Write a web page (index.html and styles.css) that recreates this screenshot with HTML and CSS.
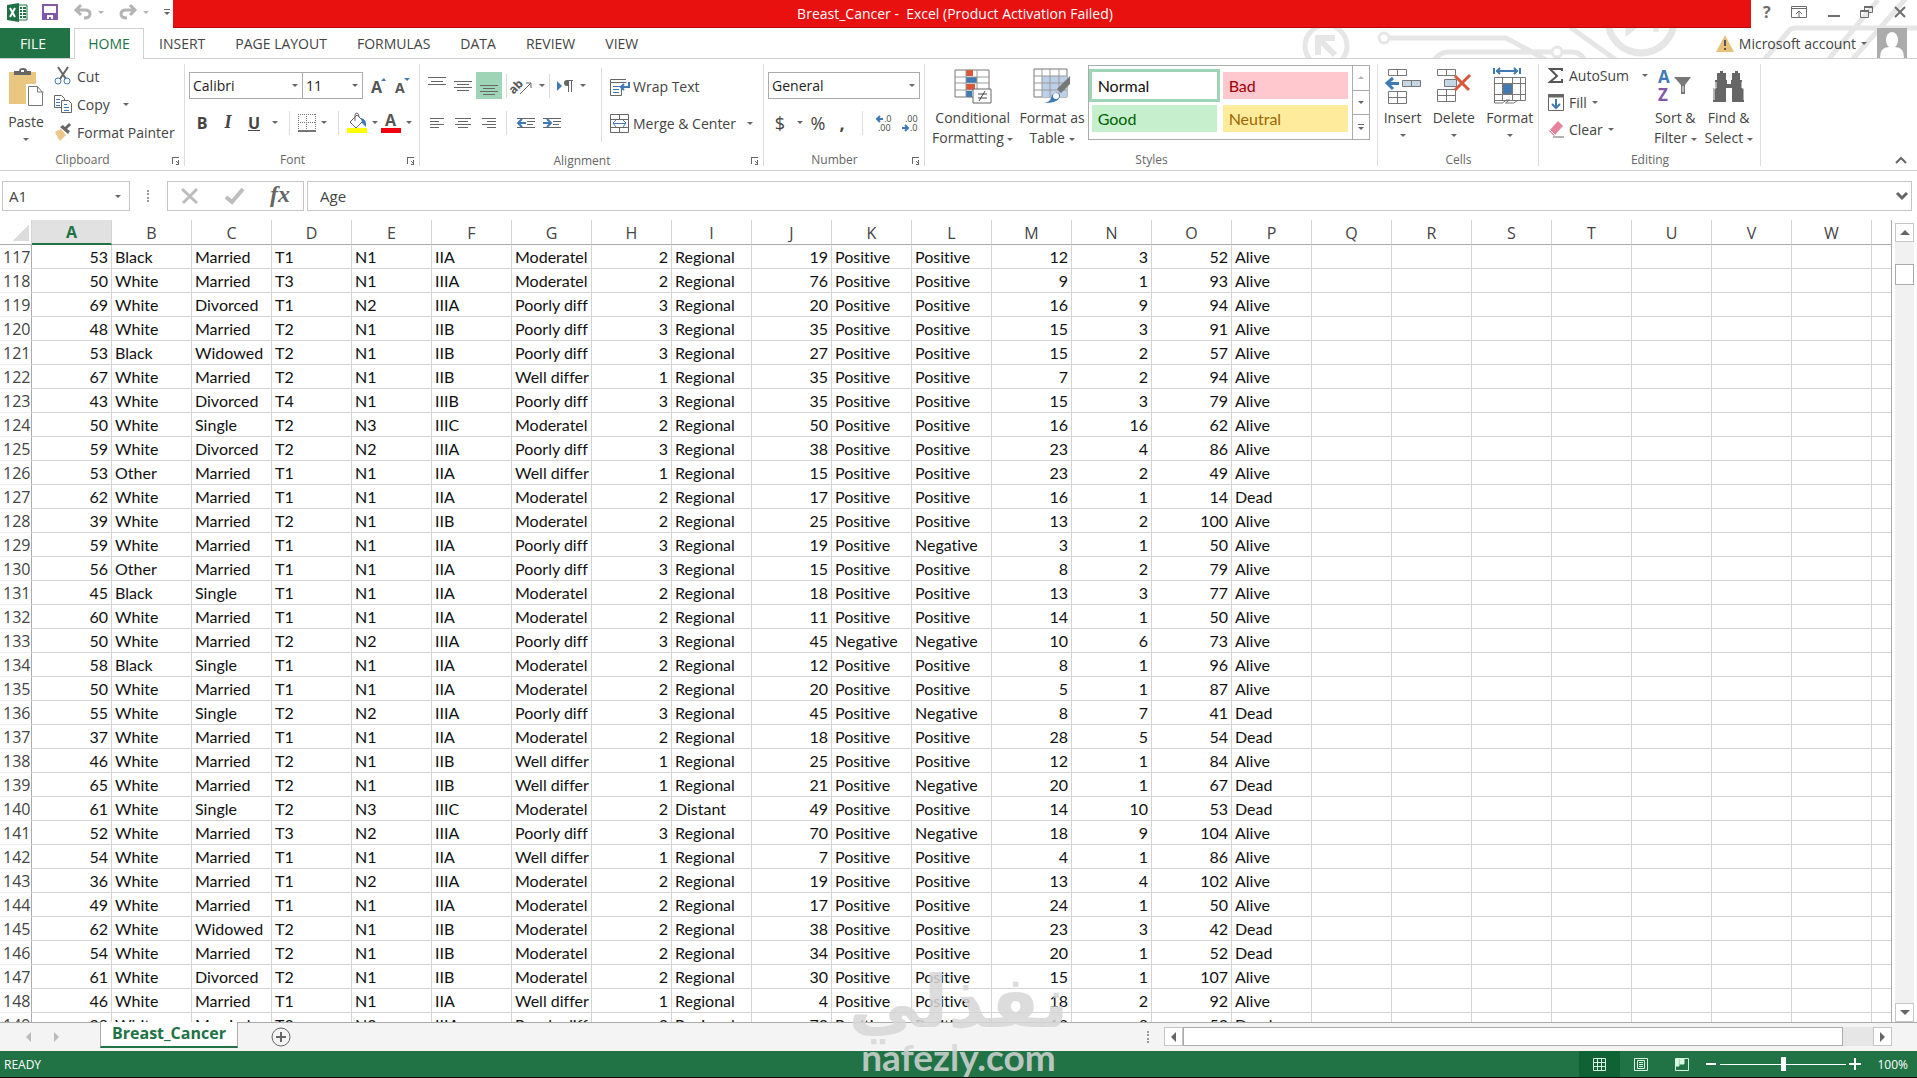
FILE: index.html
```html
<!DOCTYPE html>
<html lang="en">
  <head>
    <meta charset="UTF-8" />
    <meta name="viewport" content="width=device-width, initial-scale=1.0" />
    <title>Breast_Cancer - Excel</title>
    <link rel="stylesheet" href="styles.css">
  </head>
  <body>
    <header class="top">
      <svg class="circuit" width="617" height="58" viewBox="0 0 617 58" fill="none" stroke="#e6e6e6" stroke-width="5">
        <circle cx="26" cy="46" r="21" />
        <path d="M18 55V38h17M18 38l17 17" stroke-width="6" />
        <circle cx="84" cy="38" r="5" stroke-width="3" />
        <path d="M90 38h116l26 14 14 8M134 60q6-8 14-8h104M262 52h10q8 0 12 7" />
        <circle cx="257" cy="52" r="5" stroke-width="3" />
        <path d="M270 27l46 33" />
        <circle cx="341" cy="20" r="33" stroke-width="7" />
        <path d="M328 20v12l12-10M356 20v12" />
        <path d="M464 60l24-28q2-4 8-4h122M528 60L578 0M552 60L608-4" />
      </svg>
      <div class="title-bar">
        <div class="quick">
          <svg width="21" height="19" viewBox="0 0 21 19">
            <path d="M11 2h9v15h-9" fill="#fff" stroke="#217346" />
            <path d="M13 5h2M16 5h3M13 8h2M16 8h3M13 11h2M16 11h3M13 14h2M16 14h3" stroke="#217346" stroke-width="2" />
            <path d="M0 2l12-2v19L0 17z" fill="#1e7145" />
            <path d="M3 5l5 9M8 5l-5 9" stroke="#fff" stroke-width="2" />
          </svg>
          <button class="save" aria-label="Save">
            <svg width="16" height="16" viewBox="0 0 16 16"><path d="M1 1h14v14H1z" fill="#fff" stroke="#8258a8" stroke-width="2" /><path d="M2 9h12v6H2z" fill="#8258a8" /><path d="M5 11h6v4H9v-2H7v2H5z" fill="#fff" /></svg>
          </button>
          <button class="undo" aria-label="Undo">
            <svg width="18" height="16" viewBox="0 0 18 16" fill="none" stroke="#b4b4b4" stroke-width="3"><path d="M7 1L2 6l5 5M2 6h9q5 0 5 4 0 4-6 4" /></svg>
            <i class="caret pale"></i>
          </button>
          <button class="undo" aria-label="Redo">
            <svg width="18" height="16" viewBox="0 0 18 16" fill="none" stroke="#b4b4b4" stroke-width="3"><path d="M11 1l5 5-5 5M16 6H7q-5 0-5 4 0 4 6 4" /></svg>
            <i class="caret pale"></i>
          </button>
          <button class="custom" aria-label="Customize"><i class="caret"></i></button>
        </div>
        <h1>Breast_Cancer -&nbsp; Excel (Product Activation Failed)</h1>
        <div class="window-buttons">
          <button aria-label="Help" class="help">?</button>
          <button aria-label="Ribbon options"><svg width="16" height="12" viewBox="0 0 16 12" fill="none" stroke="#6d6d6d"><path d="M.5.5h15v11H.5zM1 2.500h14M8 11V5M5 8l3-3 3 3" /></svg></button>
          <button aria-label="Minimize"><svg width="12" height="12" viewBox="0 0 12 12"><path d="M0 9h12v2H0z" fill="#6d6d6d" /></svg></button>
          <button aria-label="Restore"><svg width="13" height="12" viewBox="0 0 13 12" fill="none" stroke="#6d6d6d"><path d="M4.500 4V.5h8v6H9M.5 4.500h8v7h-8z" /><path d="M4 1h8M1 5h8" stroke-width="2" /></svg></button>
          <button aria-label="Close"><svg width="12" height="12" viewBox="0 0 12 12" stroke="#6d6d6d" stroke-width="2"><path d="M1 1l10 10M11 1L1 11" /></svg></button>
        </div>
      </div>
      <nav class="tabs">
        <a class="file" href="#file">FILE</a>
        <a class="current" href="#home">HOME</a>
        <a href="#insert">INSERT</a>
        <a href="#layout">PAGE LAYOUT</a>
        <a href="#formulas">FORMULAS</a>
        <a href="#data">DATA</a>
        <a href="#review">REVIEW</a>
        <a href="#view">VIEW</a>
        <button class="account">
          <svg width="18" height="17" viewBox="0 0 18 17"><path d="M9 0l9 17H0z" fill="#e8c27a" /><path d="M9 5v6M9 13v2" stroke="#555" stroke-width="2" /></svg>
          Microsoft account <i class="caret"></i>
        </button>
        <svg class="avatar" width="30" height="30" viewBox="0 0 30 30"><path d="M0 0h30v30H0z" fill="#ababab" /><ellipse cx="15" cy="12" rx="6" ry="8" fill="#fff" /><path d="M3 30q0-11 9-11h6q9 0 9 11z" fill="#fff" /></svg>
      </nav>
    </header>

    <section class="ribbon">
      <div class="group clipboard">
        <div class="tools">
          <button class="big paste">
            <svg width="36" height="40" viewBox="0 0 36 40"><path d="M1 4h27v32H1z" fill="#eac780" /><path d="M6 7V3h5q0-3 4-3t4 3h4v4z" fill="#666" /><path d="M13 3h3" stroke="#fff" stroke-width="2" /><path d="M20 18h9l6 6v13H20z" fill="#fff" stroke="#fff" stroke-width="4" /><path d="M20.500 18.500h9l5 6v13h-14zM29.500 18v6h6" fill="#fff" stroke="#777" /></svg>
            <span>Paste</span><i class="caret"></i>
          </button>
          <div class="stack">
            <button><svg width="18" height="18" viewBox="0 0 18 18" fill="none"><path d="M4 0l8 12M14 0L6 12" stroke="#666" stroke-width="2" /><circle cx="4" cy="14" r="3" stroke="#3f7ab5" /><circle cx="13" cy="14" r="3" stroke="#3f7ab5" /></svg>Cut</button>
            <button><svg width="18" height="18" viewBox="0 0 18 18" fill="#fff" stroke="#666"><path d="M.5.5h7l3 3v9H.5z" /><path d="M7.500 5.500h7l3 3v9h-10z" /><path d="M2 4.500h4M2 7.500h4M2 10.500h4M10 9.500h3M10 12.500h5M10 15.500h5" stroke="#3f7ab5" /></svg>Copy <i class="caret far"></i></button>
            <button><svg width="18" height="18" viewBox="0 0 18 18"><path d="M1 9l6-3 5 6-6 6-2-3z" fill="#ecc58a" /><path d="M6 4l8 7 2-3-3-2 4-4-2-2-4 4-2-2z" fill="#666" /></svg>Format Painter</button>
          </div>
        </div>
        <footer class="with-launch">Clipboard<button class="launch" aria-label="Clipboard settings"></button></footer>
      </div>

      <div class="group font">
        <div class="rows">
          <div class="row">
            <select class="face" aria-label="Font"><option>Calibri</option></select>
            <select class="size" aria-label="Font size"><option>11</option></select>
            <button class="grow" aria-label="Increase font size"><svg width="16" height="18" viewBox="0 0 16 18"><text x="0" y="16" class="letter">A</text><path d="M10 4h5l-2-3z" fill="#3f7ab5" /></svg></button>
            <button class="grow" aria-label="Decrease font size"><svg width="16" height="18" viewBox="0 0 16 18"><text x="0" y="16" class="letter small">A</text><path d="M9 1h6l-3 3z" fill="#3f7ab5" /></svg></button>
          </div>
          <div class="row">
            <button class="glyph"><b>B</b></button>
            <button class="glyph"><em>I</em></button>
            <button class="glyph"><u>U</u></button>
            <i class="caret"></i>
            <hr>
            <button aria-label="Borders"><svg width="18" height="18" viewBox="0 0 18 18" stroke="#777" fill="none" stroke-dasharray="1 1"><path d="M.5 0v17M8.500 0v17M17.500 0v17M0 .5h18M0 8.500h18" /><path d="M0 17h18" stroke-dasharray="none" stroke-width="2" /></svg></button>
            <i class="caret"></i>
            <hr>
            <button aria-label="Fill colour"><svg width="20" height="20" viewBox="0 0 20 20"><path d="M3 9l7-7 6 6-7 7z" fill="#fff" stroke="#666" /><path d="M8 8V2q0-2 2-2t2 4" fill="none" stroke="#666" /><path d="M14 5q6 1 5 9l-4-4z" fill="#3f7ab5" /><path d="M0 15h20v5H0z" fill="#ff0" /></svg></button>
            <i class="caret"></i>
            <button aria-label="Font colour"><svg width="20" height="20" viewBox="0 0 20 20"><text x="4" y="13" class="letter">A</text><path d="M0 15h20v5H0z" fill="#f10010" /></svg></button>
            <i class="caret"></i>
          </div>
        </div>
        <footer class="with-launch">Font<button class="launch" aria-label="Font settings"></button></footer>
      </div>

      <div class="group alignment">
        <div class="tools">
          <div class="rows">
            <div class="row">
              <button class="line" aria-label="Top align"><svg width="18" height="20" viewBox="0 0 18 20" stroke="#666"><path d="M0 1.500h18M3 5.500h12M0 8.500h18" /></svg></button>
              <button class="line" aria-label="Middle align"><svg width="18" height="20" viewBox="0 0 18 20" stroke="#666"><path d="M0 5.500h18M3 8.500h12M0 11.500h18M3 14.500h12" /></svg></button>
              <button class="line on" aria-label="Bottom align"><svg width="18" height="20" viewBox="0 0 18 20" stroke="#666"><path d="M0 9.500h18M3 12.500h12M0 15.500h18M3 18.500h12" /></svg></button>
              <hr>
              <button aria-label="Orientation"><svg width="20" height="18" viewBox="0 0 20 18"><text x="-4" y="13" transform="rotate(-45 4 10)" class="letter tiny">ab</text><path d="M7 17L18 6M13 6h5v5" stroke="#666" fill="none" /></svg></button>
              <i class="caret"></i>
              <hr>
              <button aria-label="Text direction"><svg width="18" height="14" viewBox="0 0 18 14"><path d="M1 2l5 5-5 5z" fill="#3f7ab5" /><path d="M17 1.500h-6M12.500 1v12M15.500 1v12" stroke="#666" fill="none" /><path d="M12 1h-1q-3 0-3 3t3 3h1z" fill="#666" /></svg></button>
              <i class="caret"></i>
            </div>
            <div class="row">
              <button class="line" aria-label="Align left"><svg width="14" height="12" viewBox="0 0 14 12" stroke="#666"><path d="M0 1.500h14M0 4.500h9M0 7.500h14M0 10.500h9" /></svg></button>
              <button class="line" aria-label="Center"><svg width="16" height="12" viewBox="0 0 16 12" stroke="#666"><path d="M0 1.500h16M3 4.500h10M0 7.500h16M3 10.500h10" /></svg></button>
              <button class="line" aria-label="Align right"><svg width="14" height="12" viewBox="0 0 14 12" stroke="#666"><path d="M0 1.500h14M5 4.500h9M0 7.500h14M5 10.500h9" /></svg></button>
              <hr>
              <button class="line" aria-label="Decrease indent"><svg width="18" height="12" viewBox="0 0 18 12" stroke="#666"><path d="M0 1.500h18M10 4.500h8M10 7.500h6M0 10.500h18" /><path d="M9 6H1M5 2L1 6l4 4" stroke="#3f7ab5" stroke-width="2" fill="none" /></svg></button>
              <button class="line" aria-label="Increase indent"><svg width="18" height="12" viewBox="0 0 18 12" stroke="#666"><path d="M0 1.500h18M10 4.500h8M10 7.500h6M0 10.500h18" /><path d="M0 6h8M4 2l4 4-4 4" stroke="#3f7ab5" stroke-width="2" fill="none" /></svg></button>
            </div>
          </div>
          <div class="rows wide">
            <div class="row">
              <button><svg width="20" height="18" viewBox="0 0 20 18" fill="none" stroke="#666"><path d="M16 1.500H.5v3h16M11.500 10v7.500H.5v-13" /><path d="M3 8.500h10M3 11.500h6M3 14.500h6" stroke="#3f7ab5" /><path d="M19 4v5h-7M14 6l-3 3 3 3" stroke="#3f7ab5" stroke-width="2" /></svg>Wrap Text</button>
            </div>
            <div class="row">
              <button><svg width="20" height="19" viewBox="0 0 20 19" fill="none" stroke="#666"><path d="M.5.5h18v18H.5zM0 5.500h19M0 13.500h19M9.500 0v5M9.500 13v6" /><path d="M3 9.500h13M6 6L3 9l3 4M13 6l3 3-3 4" stroke="#3f7ab5" /></svg>Merge &amp; Center <i class="caret far"></i></button>
            </div>
          </div>
        </div>
        <footer class="with-launch">Alignment<button class="launch" aria-label="Alignment settings"></button></footer>
      </div>

      <div class="group number">
        <div class="rows">
          <div class="row">
            <select class="format" aria-label="Number format"><option>General</option></select>
          </div>
          <div class="row">
            <button class="sign">$</button>
            <i class="caret"></i>
            <button class="sign">%</button>
            <button class="sign"><b>,</b></button>
            <hr>
            <button class="line" aria-label="Increase decimal"><svg width="17" height="18" viewBox="0 0 17 18"><text x="8" y="8" class="dec">.0</text><text x="2" y="17" class="dec">.00</text><path d="M7 5H1M4 2L1 5l3 3" stroke="#3f7ab5" stroke-width="2" fill="none" /></svg></button>
            <button class="line" aria-label="Decrease decimal"><svg width="17" height="18" viewBox="0 0 17 18"><text x="3" y="8" class="dec">.00</text><text x="8" y="17" class="dec">.0</text><path d="M0 14h6M3 11l3 3-3 3" stroke="#3f7ab5" stroke-width="2" fill="none" /></svg></button>
          </div>
        </div>
        <footer class="with-launch">Number<button class="launch" aria-label="Number settings"></button></footer>
      </div>

      <div class="group styles">
        <div class="tools">
          <button class="big">
            <svg width="38" height="36" viewBox="0 0 38 36"><path d="M1 2h34v27H1z" fill="#fff" stroke="#777" /><path d="M12 2h7v6h-7zM12 16h9v6h-9z" fill="#d9583b" /><path d="M12 9h11v6H12zM12 23h6v6h-6z" fill="#3f7ab5" /><path d="M1 9h34M1 15h34M1 22h34M12 2v27M23 2v27" stroke="#999" fill="none" /><path d="M19 21h18v14H19z" fill="#fff" stroke="#666" /><path d="M24 26h9M24 30h9M31 23l-6 10" stroke="#444" /></svg>
            <span>Conditional<br>Formatting <i class="caret"></i></span>
          </button>
          <button class="big">
            <svg width="38" height="36" viewBox="0 0 38 36"><path d="M1 1h33v28H1z" fill="#fff" stroke="#777" /><path d="M9 8h25v21H9z" fill="#bdd0ea" /><path d="M1 8h33M1 15h33M1 22h33M9 1v28M17 1v28M26 1v28" stroke="#999" /><path d="M37 8v8l-9 9-4-4z" fill="#777" /><path d="M11 35q7-1 8-8 5-5 8 0 0 8-16 8z" fill="#3f7ab5" /><circle cx="23" cy="28" r="3" fill="#fff" /></svg>
            <span>Format as<br>Table <i class="caret"></i></span>
          </button>
          <div class="gallery">
            <button class="normal">Normal</button>
            <button class="bad">Bad</button>
            <button class="good">Good</button>
            <button class="neutral">Neutral</button>
            <div class="gallery-nav">
              <button aria-label="Previous styles"><i class="caret up pale"></i></button>
              <button aria-label="Next styles"><i class="caret"></i></button>
              <button aria-label="More styles" class="custom"><i class="caret"></i></button>
            </div>
          </div>
        </div>
        <footer>Styles</footer>
      </div>

      <div class="group cells">
        <div class="tools">
          <button class="big">
            <svg width="36" height="36" viewBox="0 0 36 36" fill="#fff" stroke="#777"><path d="M3.500 1.500h18v6h-18zM12.500 1v6M3.500 23.500h18v12h-18zM12.500 23v12M3 29.500h18" /><path d="M17.500 12.500h18v6h-18zM26.500 12v6" fill="#c5d7e4" /><path d="M14 15.500H2M8 10l-6 5 6 6" stroke="#3f7ab5" stroke-width="3" fill="none" /></svg>
            <span>Insert</span><i class="caret"></i>
          </button>
          <button class="big">
            <svg width="36" height="36" viewBox="0 0 36 36" fill="#fff" stroke="#777"><path d="M1.500 1.500h18v6h-18zM10.500 1v6M1.500 21.500h18v12h-18zM10.500 21v12M1 27.500h18" /><path d="M8.500 11.500h12v7h-12z" fill="#c5d7e4" /><path d="M19 8l14 14M34 7L19 22" stroke="#d9583b" stroke-width="3" /></svg>
            <span>Delete</span><i class="caret"></i>
          </button>
          <button class="big">
            <svg width="36" height="36" viewBox="0 0 36 36" fill="none" stroke="#777"><path d="M2.500 9.500h31v23h-31zM2 15.500h31M2 26.500h31M10.500 9v23M20.500 9v23M28.500 9v23M2.500 32v3h8l4-3h3l-4 3h8l5-3" /><path d="M11 16h9v10h-9z" fill="#3f7ab5" /><path d="M2 0v6M28 0v6M4 3h22M8 0L5 3l3 3M22 0l3 3-3 3" stroke="#3f7ab5" stroke-width="2" /></svg>
            <span>Format</span><i class="caret"></i>
          </button>
        </div>
        <footer>Cells</footer>
      </div>

      <div class="group editing">
        <div class="tools">
          <div class="stack">
            <button><svg width="16" height="17" viewBox="0 0 16 17"><path d="M14 4V2H2l7 7-7 6h12v-3" fill="none" stroke="#555" stroke-width="2" /></svg>AutoSum <i class="caret far"></i></button>
            <button><svg width="16" height="17" viewBox="0 0 16 17" fill="none" stroke="#666"><path d="M.5.5h15v16H.5z" /><path d="M0 2h16" stroke-width="3" /><path d="M8 5v9M4 10l4 4 4-4" stroke="#3f7ab5" stroke-width="2" /></svg>Fill <i class="caret"></i></button>
            <button><svg width="16" height="17" viewBox="0 0 16 17"><path d="M1 10L10 0l5 5L6 15z" fill="#e8829c" /><path d="M2 9l5 5" stroke="#fff" /><path d="M5 16h11" stroke="#666" /></svg>Clear <i class="caret"></i></button>
          </div>
          <button class="big">
            <svg width="36" height="36" viewBox="0 0 36 36"><text x="1" y="15" class="sort-a">A</text><text x="1" y="33" class="sort-z">Z</text><path d="M17 9h17l-6 8v9h-4v-9z" fill="#777" /><path d="M26 18v6" stroke="#fff" /></svg>
            <span>Sort &amp;<br>Filter <i class="caret"></i></span>
          </button>
          <button class="big">
            <svg width="36" height="36" viewBox="0 0 36 36"><path d="M9 3h3v2h3v7h1v4h4v-4h1V5h3V3h3v2h2v7h2v8h2v14H21V20h-6v14H2V20h2v-8h2V5h3z" fill="#666" /><path d="M5 14v6H3v12M31 14v6h2v12" stroke="#fff" fill="none" /></svg>
            <span>Find &amp;<br>Select <i class="caret"></i></span>
          </button>
        </div>
        <footer>Editing</footer>
      </div>
      <button class="collapse" aria-label="Collapse ribbon"><svg width="12" height="8" viewBox="0 0 12 8"><path d="M1 7l5-5 5 5" stroke="#666" stroke-width="2" fill="none" /></svg></button>
    </section>

    <section class="formula">
      <select class="name-box" aria-label="Name box"><option>A1</option></select>
      <span class="grip"></span>
      <div class="formula-buttons">
        <button aria-label="Cancel"><svg width="18" height="16" viewBox="0 0 18 16"><path d="M1 1l15 14M16 1L2 15" stroke="#bdbdbd" stroke-width="3" /></svg></button>
        <button aria-label="Enter"><svg width="20" height="16" viewBox="0 0 20 16"><path d="M1 9l6 5L18 1" stroke="#bdbdbd" stroke-width="4" fill="none" /></svg></button>
        <button class="fx" aria-label="Insert function">fx</button>
      </div>
      <div class="formula-input">
        <input type="text" value="Age" aria-label="Formula">
        <button aria-label="Expand"><svg width="12" height="9" viewBox="0 0 12 9"><path d="M1 1l5 5 5-5" stroke="#666" stroke-width="3" fill="none" /></svg></button>
      </div>
    </section>

    <main class="sheet">
      <div class="grid">
        <table>
          <thead><tr id="columns"></tr></thead>
          <tbody id="records"></tbody>
        </table>
      </div>
      <div class="vscroll">
        <button aria-label="Scroll up"><i class="caret up big-caret"></i></button>
        <span class="thumb"></span>
        <button aria-label="Scroll down"><i class="caret big-caret"></i></button>
      </div>
    </main>

    <section class="sheet-bar">
      <div class="sheet-tabs">
        <button class="arrow" aria-label="Previous sheet"><i class="caret left"></i></button>
        <button class="arrow" aria-label="Next sheet"><i class="caret right"></i></button>
        <a class="sheet-tab" href="#sheet">Breast_Cancer</a>
        <button class="add" aria-label="New sheet"><svg width="20" height="20" viewBox="0 0 20 20" fill="none" stroke="#666"><circle cx="10" cy="10" r="9" /><path d="M10 5v10M5 10h10" stroke-width="2" /></svg></button>
      </div>
      <span class="grip"></span>
      <div class="hscroll">
        <button aria-label="Scroll left"><i class="caret left"></i></button>
        <span class="thumb"></span>
        <button aria-label="Scroll right"><i class="caret right"></i></button>
      </div>
    </section>

    <footer class="status">
      <span class="ready">READY</span>
      <button class="view on" aria-label="Normal view"><svg width="14" height="13" viewBox="0 0 14 13" fill="none" stroke="#d8f5e2"><path d="M.5.5h12v12H.5zM4.500 0v13M8.500 0v13M0 4.500h13M0 8.500h13" /></svg></button>
      <button class="view" aria-label="Page layout view"><svg width="14" height="13" viewBox="0 0 14 13" fill="none" stroke="#d8f5e2"><path d="M.5.5h13v12H.5zM3.500 2.500h7v8h-7zM5 4.500h4M5 6.500h4M5 8.500h4" /></svg></button>
      <button class="view" aria-label="Page break view"><svg width="14" height="13" viewBox="0 0 14 13" fill="none" stroke="#d8f5e2"><path d="M.5.5h13v12H.5z" /><path d="M1 1h3v7H1zM5 1h4v5H5z" fill="#d8f5e2" /></svg></button>
      <button class="zoom" aria-label="Zoom out"><svg width="10" height="10" viewBox="0 0 10 10"><path d="M0 5h10" stroke="#fff" stroke-width="2" /></svg></button>
      <input type="range" min="0" max="100" value="50" aria-label="Zoom">
      <button class="zoom" aria-label="Zoom in"><svg width="12" height="12" viewBox="0 0 12 12"><path d="M0 6h12M6 0v12" stroke="#fff" stroke-width="2" /></svg></button>
      <span class="percent">100%</span>
    </footer>

    <div class="watermark">
      <span class="arabic" lang="ar" dir="rtl">نفذلي</span>
      <span class="domain">nafezly.com</span>
    </div>
    <script src="script.js"></script>
  </body>
</html>
```
FILE: styles.css
```css
* {
  box-sizing: border-box;
}
body {
  margin: 0;
  height: 100vh;
  display: flex;
  flex-direction: column;
  overflow: hidden;
  position: relative;
  background-color: #fff;
  color: #444;
  font-family: "Open Sans", "Noto Sans", sans-serif;
  font-size: 14px;
}
button,
select,
input {
  font: inherit;
  color: inherit;
  margin: 0;
  padding: 0;
  border: none;
  background: none;
}
button {
  display: flex;
  align-items: center;
  justify-content: center;
  white-space: nowrap;
}
svg {
  display: block;
  flex-shrink: 0;
}
button svg {
  overflow: visible;
}
a {
  color: inherit;
  text-decoration: none;
}
hr {
  width: 1px;
  height: 24px;
  margin: 0 8px;
  border: none;
  background-color: #dcdcdc;
}
.caret {
  display: inline-block;
  flex-shrink: 0;
  border: 3px solid transparent;
  border-top-color: #666;
  border-bottom-width: 0;
  vertical-align: middle;
}
.caret.up {
  border-top-width: 0;
  border-bottom: 3px solid #666;
}
.caret.left,
.caret.right {
  border: 5px solid transparent;
}
.caret.left {
  border-right: 5px solid #666;
  border-left-width: 0;
}
.caret.right {
  border-left: 5px solid #666;
  border-right-width: 0;
}
.caret.big-caret {
  border-width: 5px;
}
.caret.big-caret.up {
  border-top-width: 0;
}
.caret.big-caret:not(.up) {
  border-bottom-width: 0;
}
.caret.pale {
  border-top-color: #b4b4b4;
}
.caret.up.pale {
  border-bottom-color: #b4b4b4;
}
.caret.far {
  margin-left: 8px;
}

/* title bar and tabs */
.top {
  position: relative;
}
.circuit {
  position: absolute;
  top: 0;
  right: 0;
}
.title-bar {
  display: flex;
  height: 28px;
  position: relative;
}
.quick {
  display: flex;
  align-items: center;
  width: 173px;
  padding: 0 2px 4px 7px;
}
.save {
  margin: 0 16px 0 14px;
}
.undo {
  gap: 6px;
  margin-right: 15px;
}
.custom {
  flex-direction: column;
  gap: 2px;
}
.custom::before {
  content: "";
  width: 6px;
  height: 1px;
  background-color: #666;
}
.title-bar h1 {
  flex: 1;
  margin: 0;
  padding-right: 14px;
  background-color: #e91010;
  border-bottom: 1px solid #b40c0c;
  color: #fff;
  font-size: 14px;
  font-weight: normal;
  line-height: 27px;
  text-align: center;
}
.window-buttons {
  display: flex;
  align-items: center;
  justify-content: space-between;
  width: 166px;
  padding: 0 11px 4px 12px;
}
.help {
  color: #6d6d6d;
  font-size: 16px;
  font-weight: bold;
}
.tabs {
  position: relative;
  display: flex;
  height: 31px;
  line-height: 31px;
  border-bottom: 1px solid #d0d0d0;
}
.tabs a {
  padding: 0 15px;
}
.tabs .file {
  width: 70px;
  padding: 0 4px 0 0;
  background-color: #217346;
  color: #fff;
  text-align: center;
}
.tabs .current {
  width: 70px;
  height: 31px;
  margin-left: 4px;
  padding: 0;
  background-color: #fff;
  border: 1px solid #d0d0d0;
  border-bottom: none;
  color: #217346;
  text-align: center;
  line-height: 29px;
}
.account {
  gap: 5px;
  margin-left: auto;
}
.avatar {
  margin: 0 10px;
}

/* ribbon */
.ribbon {
  display: flex;
  height: 112px;
  border-bottom: 1px solid #d0d0d0;
}
.group {
  position: relative;
  display: flex;
  flex-direction: column;
  justify-content: space-between;
  flex-shrink: 0;
}
.group::after {
  content: "";
  position: absolute;
  top: 5px;
  right: 0;
  width: 1px;
  height: 102px;
  background-color: #dcdcdc;
}
.group footer {
  height: 20px;
  color: #666;
  font-size: 12px;
  line-height: 20px;
  text-align: center;
}
.group footer.with-launch {
  padding-right: 20px;
}
.launch {
  position: absolute;
  right: 6px;
  bottom: 6px;
  width: 7px;
  height: 7px;
  border-top: 1px solid #666;
  border-left: 1px solid #666;
}
.launch::after {
  content: "";
  width: 4px;
  height: 4px;
  margin: 3px 0 0 3px;
  border-right: 1px solid #666;
  border-bottom: 1px solid #666;
  background: linear-gradient(45deg, transparent 40%, #666 40%, #666 60%, transparent 60%);
}
.tools {
  display: flex;
}
.clipboard {
  width: 185px;
}
.font {
  width: 235px;
}
.alignment {
  width: 344px;
}
.number {
  width: 161px;
}
.styles {
  width: 453px;
}
.cells {
  width: 161px;
}
.editing {
  width: 222px;
}
.big {
  flex-direction: column;
  justify-content: flex-start;
  padding: 9px 3px 0;
  line-height: 20px;
  text-align: center;
}
.big svg {
  margin-bottom: 4px;
}
.big > .caret {
  margin-top: 6px;
}
.big.paste {
  width: 52px;
}
.stack {
  padding-top: 3px;
}
.stack button {
  height: 28px;
  gap: 5px;
  padding: 0 2px;
}
.rows {
  padding: 8px 0 0 4px;
}
.row {
  display: flex;
  align-items: center;
  height: 37px;
}
.row button {
  gap: 3px;
}
select {
  appearance: none;
  height: 27px;
  padding-left: 3px;
  border: 1px solid #ababab;
  background: #fff url("data:image/svg+xml,%3Csvg xmlns='http://www.w3.org/2000/svg' width='6' height='3'%3E%3Cpath d='M0 0h6L3 3z' fill='%23666'/%3E%3C/svg%3E") no-repeat right 4px center;
  color: #222;
}
.face {
  width: 114px;
}
.size {
  width: 61px;
  margin-left: -1px;
}
.format {
  width: 152px;
}
.grow {
  margin-left: 8px;
}
.letter {
  fill: #555;
  font-size: 16px;
  font-weight: bold;
}
.letter.small {
  font-size: 14px;
}
.letter.tiny {
  font-size: 12px;
}
.dec {
  fill: #444;
  font-size: 9px;
}
.font .row > .caret,
.number .row > .caret {
  margin: 0 3px 0 5px;
}
.alignment .row > .caret {
  margin-left: 6px;
}
.glyph {
  width: 26px;
  font-size: 16px;
}
.glyph b,
.glyph em,
.glyph u {
  font-weight: bold;
}
.glyph em {
  font-family: "Liberation Serif", serif;
  font-size: 18px;
}
.line {
  width: 26px;
  height: 27px;
}
.line.on {
  background-color: #9fd5b7;
}
.alignment hr {
  margin: 0 6px 0 4px;
}
.alignment .wide {
  border-left: 1px solid #dcdcdc;
  margin: 9px 0 9px 6px;
  padding: 0 0 0 8px;
}
.alignment .rows:not(.wide) {
  width: 175px;
}
.sign {
  width: 24px;
  font-size: 18px;
}
.styles .tools {
  padding-left: 4px;
}
.gallery {
  position: relative;
  display: grid;
  grid-template-columns: 131px 131px;
  grid-template-rows: 33px 33px;
  flex: 1;
  height: 75px;
  margin: 6px 8px 0 0;
  padding-top: 3px;
  border: 1px solid #ababab;
}
.gallery > button {
  justify-content: flex-start;
  margin: 3px;
  padding-left: 6px;
  font-family: Lato, sans-serif;
  font-size: 16px;
}
.gallery .normal {
  margin: 0;
  border: 3px solid #9fd5b7;
  color: #111;
}
.gallery .bad {
  background-color: #ffc7ce;
  color: #9c0006;
}
.gallery .good {
  background-color: #c6efce;
  color: #006100;
}
.gallery .neutral {
  background-color: #ffeb9c;
  color: #9c6500;
}
.gallery-nav {
  position: absolute;
  top: 0;
  right: 0;
  bottom: 0;
  width: 17px;
  display: flex;
  flex-direction: column;
  border-left: 1px solid #ababab;
}
.gallery-nav button {
  flex: 1;
}
.gallery-nav button + button {
  border-top: 1px solid #ababab;
}
.cells .tools {
  justify-content: space-around;
}
.editing .tools {
  gap: 2px;
}
.editing .stack {
  width: 110px;
  padding: 3px 0 0 7px;
}
.editing .stack button {
  height: 27px;
}
.sort-a,
.sort-z {
  fill: #3f7ab5;
  font-size: 17px;
  font-weight: bold;
}
.sort-z {
  fill: #8258a8;
}
.collapse {
  align-self: flex-end;
  margin: 0 10px 6px auto;
}

/* formula bar */
.formula {
  display: flex;
  height: 49px;
  padding: 10px 5px 9px 2px;
  font-size: 15px;
}
.name-box {
  width: 128px;
  height: 30px;
  padding-left: 6px;
  border-color: #c6c6c6;
  background-position: right 8px center;
  color: #444;
}
.grip {
  width: 3px;
  height: 12px;
  margin: 9px 17px;
  border-left: 2px dotted #999;
}
.formula-buttons {
  display: flex;
  justify-content: space-between;
  width: 137px;
  padding: 0 13px;
  border: 1px solid #c6c6c6;
}
.fx {
  padding-bottom: 4px;
  color: #666;
  font-family: "Liberation Serif", serif;
  font-size: 24px;
  font-style: italic;
  font-weight: bold;
}
.formula-input {
  flex: 1;
  display: flex;
  margin-left: 3px;
  padding: 0 3px 0 12px;
  border: 1px solid #c6c6c6;
}
.formula-input input {
  flex: 1;
}

/* cells */
.sheet {
  flex: 1;
  display: flex;
  min-height: 0;
}
.grid {
  flex: 1;
  overflow: hidden;
  border-right: 1px solid #ababab;
}
table {
  width: 100%;
  table-layout: fixed;
  border-spacing: 0;
}
th,
td {
  width: 80px;
  height: 24px;
  padding: 0 3px;
  border-right: 1px solid #d4d4d4;
  border-bottom: 1px solid #d4d4d4;
  overflow: hidden;
  white-space: nowrap;
  line-height: 22px;
}
td {
  color: #111;
  font-family: Lato, sans-serif;
  font-size: 16px;
  font-variant-ligatures: none;
}
td:nth-child(8) {
  padding-right: 0;
}
.num {
  text-align: right;
}
th {
  font-size: 16px;
  font-weight: normal;
}
thead th {
  height: 25px;
  padding-top: 2px;
  border-bottom-color: #ababab;
}
thead th.picked {
  background-color: #e1e1e1;
  border-bottom: 2px solid #217346;
  color: #217346;
  font-weight: bold;
  line-height: 21px;
}
th:first-child {
  width: 32px;
  border-right-color: #ababab;
  border-bottom-color: #eee;
}
thead th:first-child {
  border-right-color: #d4d4d4;
  border-bottom-color: #ababab;
  background: linear-gradient(135deg, transparent 50%, #dcdcdc 50%) 12px 5px / 17px 16px no-repeat;
}
th:last-child,
td:last-child {
  width: auto;
  border-right: none;
}
.vscroll {
  display: flex;
  flex-direction: column;
  justify-content: space-between;
  width: 19px;
  margin: 3px 3px 0;
  background-color: #f1f1f1;
}
.vscroll button,
.hscroll button {
  width: 19px;
  height: 19px;
  border: 1px solid #c6c6c6;
  background-color: #fff;
}
.thumb {
  border: 1px solid #ababab;
  background-color: #fff;
}
.vscroll .thumb {
  height: 21px;
  margin: 22px 0 auto;
}

/* sheet tabs */
.sheet-bar {
  display: flex;
  height: 29px;
  padding-right: 25px;
  border-top: 1px solid #ababab;
  background-color: #f4f4f4;
}
.sheet-tabs {
  flex: 1;
  display: flex;
  align-items: center;
  padding-left: 14px;
}
.arrow {
  width: 28px;
  opacity: 0.4;
}
.sheet-tab {
  align-self: flex-start;
  height: 26px;
  margin: -1px 33px 0 30px;
  padding: 0 11px;
  border: 1px solid #ababab;
  border-top: none;
  border-bottom: 2px solid #217346;
  background-color: #fff;
  color: #217346;
  font-size: 16px;
  font-weight: bold;
  line-height: 22px;
}
.sheet-bar .grip {
  margin: 8px 14px;
}
.hscroll {
  display: flex;
  width: 38vw;
  height: 19px;
  margin-top: 4px;
  background-color: #e6e6e6;
}
.hscroll .thumb {
  flex: 1;
  margin-right: 30px;
}

/* status bar */
.status {
  display: flex;
  align-items: center;
  height: 27px;
  padding-right: 9px;
  border-bottom: 1px solid #111;
  background-color: #217346;
  color: #fff;
  font-size: 12px;
}
.ready {
  flex: 1;
  padding-left: 4px;
}
.view {
  width: 41px;
  height: 26px;
}
.view.on {
  background-color: #0e6233;
}
.zoom {
  width: 18px;
}
.status input {
  appearance: none;
  width: 126px;
  height: 14px;
  background: linear-gradient(#fff, #fff) center / 100% 1px no-repeat;
}
.status input::-webkit-slider-thumb {
  appearance: none;
  width: 5px;
  height: 14px;
  background-color: #fff;
}
.percent {
  width: 44px;
  text-align: right;
}

.watermark {
  position: absolute;
  left: 0;
  right: 0;
  bottom: 0;
  display: flex;
  flex-direction: column;
  align-items: center;
  color: rgba(214, 214, 214, 0.85);
  font-weight: bold;
  pointer-events: none;
}
.arabic {
  font-family: "DejaVu Sans", sans-serif;
  font-size: 72px;
  line-height: 68px;
}
.domain {
  font-family: Lato, sans-serif;
  font-size: 37px;
  line-height: 42px;
}
```
FILE: script.js
```js
const columns = "ABCDEFGHIJKLMNOPQRSTUVW".split("");

const records = `
53,Black,Married,T1,N1,IIA,Moderatel,2,Regional,19,Positive,Positive,12,3,52,Alive
50,White,Married,T3,N1,IIIA,Moderatel,2,Regional,76,Positive,Positive,9,1,93,Alive
69,White,Divorced,T1,N2,IIIA,Poorly diff,3,Regional,20,Positive,Positive,16,9,94,Alive
48,White,Married,T2,N1,IIB,Poorly diff,3,Regional,35,Positive,Positive,15,3,91,Alive
53,Black,Widowed,T2,N1,IIB,Poorly diff,3,Regional,27,Positive,Positive,15,2,57,Alive
67,White,Married,T2,N1,IIB,Well differ,1,Regional,35,Positive,Positive,7,2,94,Alive
43,White,Divorced,T4,N1,IIIB,Poorly diff,3,Regional,35,Positive,Positive,15,3,79,Alive
50,White,Single,T2,N3,IIIC,Moderatel,2,Regional,50,Positive,Positive,16,16,62,Alive
59,White,Divorced,T2,N2,IIIA,Poorly diff,3,Regional,38,Positive,Positive,23,4,86,Alive
53,Other,Married,T1,N1,IIA,Well differ,1,Regional,15,Positive,Positive,23,2,49,Alive
62,White,Married,T1,N1,IIA,Moderatel,2,Regional,17,Positive,Positive,16,1,14,Dead
39,White,Married,T2,N1,IIB,Moderatel,2,Regional,25,Positive,Positive,13,2,100,Alive
59,White,Married,T1,N1,IIA,Poorly diff,3,Regional,19,Positive,Negative,3,1,50,Alive
56,Other,Married,T1,N1,IIA,Poorly diff,3,Regional,15,Positive,Positive,8,2,79,Alive
45,Black,Single,T1,N1,IIA,Moderatel,2,Regional,18,Positive,Positive,13,3,77,Alive
60,White,Married,T1,N1,IIA,Moderatel,2,Regional,11,Positive,Positive,14,1,50,Alive
50,White,Married,T2,N2,IIIA,Poorly diff,3,Regional,45,Negative,Negative,10,6,73,Alive
58,Black,Single,T1,N1,IIA,Moderatel,2,Regional,12,Positive,Positive,8,1,96,Alive
50,White,Married,T1,N1,IIA,Moderatel,2,Regional,20,Positive,Positive,5,1,87,Alive
55,White,Single,T2,N2,IIIA,Poorly diff,3,Regional,45,Positive,Negative,8,7,41,Dead
37,White,Married,T1,N1,IIA,Moderatel,2,Regional,18,Positive,Positive,28,5,54,Dead
46,White,Married,T2,N1,IIB,Well differ,1,Regional,25,Positive,Positive,12,1,84,Alive
65,White,Married,T2,N1,IIB,Well differ,1,Regional,21,Positive,Negative,20,1,67,Dead
61,White,Single,T2,N3,IIIC,Moderatel,2,Distant,49,Positive,Positive,14,10,53,Dead
52,White,Married,T3,N2,IIIA,Poorly diff,3,Regional,70,Positive,Negative,18,9,104,Alive
54,White,Married,T1,N1,IIA,Well differ,1,Regional,7,Positive,Positive,4,1,86,Alive
36,White,Married,T1,N2,IIIA,Moderatel,2,Regional,19,Positive,Positive,13,4,102,Alive
49,White,Married,T1,N1,IIA,Moderatel,2,Regional,17,Positive,Positive,24,1,50,Alive
62,White,Widowed,T2,N1,IIB,Moderatel,2,Regional,38,Positive,Positive,23,3,42,Dead
54,White,Married,T2,N1,IIB,Moderatel,2,Regional,34,Positive,Positive,20,1,52,Dead
61,White,Divorced,T2,N1,IIB,Moderatel,2,Regional,30,Positive,Positive,15,1,107,Alive
46,White,Married,T1,N1,IIA,Well differ,1,Regional,4,Positive,Positive,18,2,92,Alive
28,White,Married,T3,N2,IIIA,Poorly diff,3,Regional,73,Positive,Positive,12,8,52,Dead
`.trim().split("\n");

const firstRow = 117;

document.getElementById("columns").innerHTML =
  "<th></th>" +
  columns.map((name) => `<th${name === "A" ? ' class="picked"' : ""}>${name}</th>`).join("") +
  "<th></th>";

document.getElementById("records").innerHTML = records
  .map((line, index) => {
    const values = line.split(",");
    const cells = [...columns, ""].map((name, i) => {
      const value = values[i] || "";
      const number = value !== "" && !isNaN(value);
      return `<td${number ? ' class="num"' : ""}>${value}</td>`;
    });
    return `<tr><th>${firstRow + index}</th>${cells.join("")}</tr>`;
  })
  .join("");
```
